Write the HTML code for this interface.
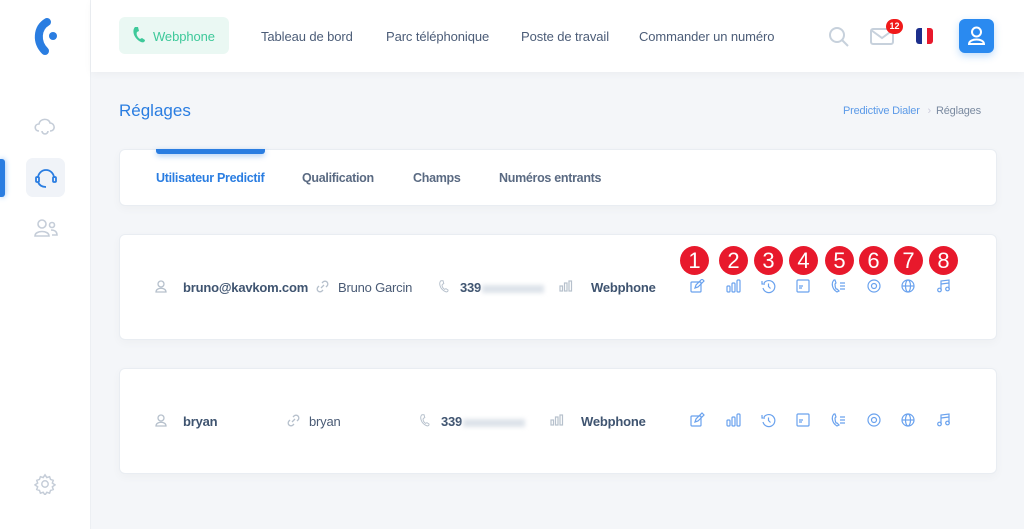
<!DOCTYPE html>
<html><head><meta charset="utf-8"><style>
*{margin:0;padding:0;box-sizing:border-box}
body{width:1024px;height:529px;overflow:hidden;background:#f4f6f9;font-family:"Liberation Sans",sans-serif;position:relative;color:#4a5b75}
.side{position:absolute;left:0;top:0;width:91px;height:529px;background:#fff;border-right:1px solid #eceff3}
.hdr{position:absolute;left:91px;top:0;right:0;height:72px;background:#fff;box-shadow:0 2px 8px rgba(0,0,0,.04)}
.abs{position:absolute}
.nav{position:absolute;top:29px;font-size:13px;color:#4c5d78;letter-spacing:-0.1px}
.card{position:absolute;left:119px;width:878px;background:#fff;border-radius:6px;border:1px solid #e9edf2;box-shadow:0 3px 10px rgba(0,0,0,.03)}
.t{position:absolute;font-size:13px;letter-spacing:-0.2px}
.b{font-weight:bold;color:#3f5470}
.ic{position:absolute}
.badge{position:absolute;top:246px;width:29px;height:29px;border-radius:50%;background:#e8192c;color:#fff;font-size:22px;text-align:center;line-height:29px}
.blur{display:inline-block;width:62px;height:8px;background:#dde3ea;filter:blur(2px);vertical-align:middle;margin-left:1px}
.tab{position:absolute;top:171px;font-size:12.5px;font-weight:bold;color:#5a6a82;letter-spacing:-0.3px}
</style></head><body>
<div class="side">
 <svg class="ic" style="left:30px;top:16px" width="32" height="42" viewBox="0 0 32 42"><path d="M17 6 C7 12 6 26 15 35" fill="none" stroke="#2a7de1" stroke-width="8" stroke-linecap="round"/><circle cx="23" cy="20" r="4" fill="#2a7de1"/></svg>
 <svg class="ic" style="left:33px;top:116px" width="24" height="20" viewBox="0 0 24 20" fill="none" stroke="#c5cdd8" stroke-width="1.6"><path d="M6 15 C1 15 1 8 6 8 C7 2 16 2 17 7 C22 7 23 15 17 15"/><path d="M9 15 a3 3 0 0 0 6 0"/></svg>
 <div class="abs" style="left:0;top:159px;width:5px;height:38px;background:#2a7de1;border-radius:0 3px 3px 0;box-shadow:0 0 6px #8bbcf5"></div>
 <div class="abs" style="left:26px;top:158px;width:39px;height:39px;background:#f0f3f8;border-radius:7px"></div>
 <svg class="ic" style="left:34px;top:166px" width="24" height="24" viewBox="0 0 24 24" fill="none" stroke="#2a7de1" stroke-width="1.8"><path d="M4 12 a8 8 0 0 1 16 0"/><rect x="2" y="11" width="3" height="5" rx="1"/><rect x="19" y="11" width="3" height="5" rx="1"/><path d="M4 16 q2 5 8 5"/></svg>
 <svg class="ic" style="left:33px;top:218px" width="26" height="20" viewBox="0 0 26 20" fill="none" stroke="#c5cdd8" stroke-width="1.6"><circle cx="9" cy="6" r="4"/><path d="M2 18 c0-6 14-6 14 0z"/><circle cx="19" cy="7" r="2.5"/><path d="M18 12 c4 0 6 2 6 5h-5"/></svg>
 <svg class="ic" style="left:34px;top:473px" width="22" height="22" viewBox="0 0 24 24" fill="none" stroke="#c5cdd8" stroke-width="1.6"><circle cx="12" cy="12" r="3.5"/><path d="M12 2 l2 3 3-1 1 3 3 1-1 3 3 2-3 2 1 3-3 1-1 3-3-1-2 3-2-3-3 1-1-3-3-1 1-3-3-2 3-2-1-3 3-1 1-3 3 1z"/></svg>
</div>
<div class="hdr"></div>
<div class="abs" style="left:119px;top:17px;width:110px;height:37px;background:#eaf8f3;border-radius:6px"></div>
<svg class="ic" style="left:132px;top:26px" width="16" height="18" viewBox="0 0 16 18"><path d="M3 1 C0 4 1 12 9 16 C11 17 13 16 13 14 L10 12 L8 13 C5 11 4 8 5 6 L7 5 L6 1Z" fill="#3ec99a"/></svg>
<div class="nav" style="left:153px;color:#3ec99a">Webphone</div>
<div class="nav" style="left:261px">Tableau de bord</div>
<div class="nav" style="left:386px">Parc téléphonique</div>
<div class="nav" style="left:521px">Poste de travail</div>
<div class="nav" style="left:639px">Commander un numéro</div>
<svg class="ic" style="left:828px;top:26px" width="22" height="22" viewBox="0 0 22 22" fill="none" stroke="#c7d1dc" stroke-width="2"><circle cx="9" cy="9" r="7"/><path d="M14 14l6 6"/></svg>
<svg class="ic" style="left:870px;top:28px" width="24" height="17" viewBox="0 0 24 17" fill="none" stroke="#c7d1dc" stroke-width="2"><rect x="1" y="1" width="22" height="15" rx="2"/><path d="M1 2l11 8 11-8"/></svg>
<div class="abs" style="left:886px;top:19px;width:17px;height:15px;border-radius:8px;background:#f01a1a;color:#fff;font-size:9px;font-weight:bold;text-align:center;line-height:15px">12</div>
<div class="abs" style="left:916px;top:28px;width:17px;height:16px;border-radius:3px;overflow:hidden;display:flex"><div style="flex:1;background:#1c2f8c"></div><div style="flex:1;background:#fff"></div><div style="flex:1;background:#e8192c"></div></div>
<div class="abs" style="left:959px;top:19px;width:35px;height:34px;background:#2a8af0;border-radius:6px;box-shadow:0 3px 8px rgba(42,138,240,.3)"></div>
<svg class="ic" style="left:967px;top:26px" width="19" height="20" viewBox="0 0 19 20" fill="none" stroke="#fff" stroke-width="2"><circle cx="9.5" cy="6" r="4.5"/><path d="M2 18c0-6 15-6 15 0z"/></svg>
<div class="abs" style="left:119px;top:101px;font-size:17px;color:#2a7de1">Réglages</div>
<div class="abs" style="left:843px;top:105px;font-size:11px;color:#5b9ae8;letter-spacing:-0.2px">Predictive Dialer <span style="color:#ccd;margin:0 5px">›</span><span style="color:#7a8aa0">Réglages</span></div>
<div class="card" style="top:149px;height:57px"></div>
<div class="abs" style="left:156px;top:149px;width:109px;height:5px;background:#2a7de1;border-radius:0 0 3px 3px;box-shadow:0 2px 6px rgba(42,125,225,.4)"></div>
<div class="tab" style="left:156px;color:#2a7de1">Utilisateur Predictif</div>
<div class="tab" style="left:302px">Qualification</div>
<div class="tab" style="left:413px">Champs</div>
<div class="tab" style="left:499px">Numéros entrants</div>
<div class="card" style="top:234px;height:106px"></div>
<div class="card" style="top:368px;height:106px"></div>
<div class="badge" style="left:680px">1</div><div class="badge" style="left:719px">2</div><div class="badge" style="left:754px">3</div><div class="badge" style="left:789px">4</div><div class="badge" style="left:825px">5</div><div class="badge" style="left:859px">6</div><div class="badge" style="left:894px">7</div><div class="badge" style="left:929px">8</div>
<svg class="ic" style="left:155px;top:280px" width="12" height="13" viewBox="0 0 12 13" fill="none" stroke="#b6c0cc" stroke-width="1.3"><circle cx="6" cy="4" r="3"/><path d="M1 12c0-5 10-5 10 0z"/></svg>
<div class="t b" style="left:183px;top:280px">bruno@kavkom.com</div>
<svg class="ic" style="left:316px;top:280px" width="13" height="13" viewBox="0 0 13 13" fill="none" stroke="#b6c0cc" stroke-width="1.3"><path d="M5 8l3-3M6 3l1-1a2.5 2.5 0 0 1 4 4l-1 1M7 10l-1 1a2.5 2.5 0 0 1-4-4l1-1"/></svg>
<div class="t" style="left:338px;top:280px">Bruno Garcin</div>
<svg class="ic" style="left:438px;top:280px" width="13" height="13" viewBox="0 0 16 18"><path d="M3 1 C0 4 1 12 9 16 C11 17 13 16 13 14 L10 12 L8 13 C5 11 4 8 5 6 L7 5 L6 1Z" fill="none" stroke="#b6c0cc" stroke-width="1.3"/></svg>
<div class="t b" style="left:460px;top:280px">339<span class="blur"></span></div>
<svg class="ic" style="left:559px;top:280px" width="14" height="12" viewBox="0 0 14 12" fill="none" stroke="#b6c0cc" stroke-width="1.2"><rect x="1" y="6" width="2.5" height="5"/><rect x="5.5" y="3" width="2.5" height="8"/><rect x="10" y="1" width="2.5" height="10"/></svg>
<div class="t b" style="left:591px;top:280px">Webphone</div>
<svg class="ic" style="left:155px;top:414px" width="12" height="13" viewBox="0 0 12 13" fill="none" stroke="#b6c0cc" stroke-width="1.3"><circle cx="6" cy="4" r="3"/><path d="M1 12c0-5 10-5 10 0z"/></svg>
<div class="t b" style="left:183px;top:414px">bryan</div>
<svg class="ic" style="left:287px;top:414px" width="13" height="13" viewBox="0 0 13 13" fill="none" stroke="#b6c0cc" stroke-width="1.3"><path d="M5 8l3-3M6 3l1-1a2.5 2.5 0 0 1 4 4l-1 1M7 10l-1 1a2.5 2.5 0 0 1-4-4l1-1"/></svg>
<div class="t" style="left:309px;top:414px">bryan</div>
<svg class="ic" style="left:419px;top:414px" width="13" height="13" viewBox="0 0 16 18"><path d="M3 1 C0 4 1 12 9 16 C11 17 13 16 13 14 L10 12 L8 13 C5 11 4 8 5 6 L7 5 L6 1Z" fill="none" stroke="#b6c0cc" stroke-width="1.3"/></svg>
<div class="t b" style="left:441px;top:414px">339<span class="blur"></span></div>
<svg class="ic" style="left:550px;top:414px" width="14" height="12" viewBox="0 0 14 12" fill="none" stroke="#b6c0cc" stroke-width="1.2"><rect x="1" y="6" width="2.5" height="5"/><rect x="5.5" y="3" width="2.5" height="8"/><rect x="10" y="1" width="2.5" height="10"/></svg>
<div class="t b" style="left:581px;top:414px">Webphone</div>
<svg width="0" height="0" style="position:absolute"><defs>
<g id="a1"><rect x="1" y="3" width="10" height="10" rx="1"/><path d="M5 9l1-3 6-6 2 2-6 6z"/></g>
<g id="a2"><rect x="1" y="7" width="3" height="6" rx="1"/><rect x="6" y="4" width="3" height="9" rx="1"/><rect x="11" y="1" width="3" height="12" rx="1"/></g>
<g id="a3"><path d="M3 4a6 6 0 1 1-1 5"/><path d="M1 2v3h3"/><path d="M7.5 4.5v3l2 2"/></g>
<g id="a4"><rect x="1" y="1" width="12" height="12" rx="1"/><path d="M3 7h4M3 9h3"/></g>
<g id="a5"><path d="M3 1 C0 4 1 10 6 13 L8 12 L6 10 L5 10 C4 8 4 6 4 5 L5 4 L4 1Z"/><path d="M9 4h5M9 7h5M9 10h5"/></g>
<g id="a6"><circle cx="7" cy="7" r="6"/><circle cx="7" cy="7" r="2.5"/></g>
<g id="a7"><circle cx="7" cy="7" r="6"/><ellipse cx="7" cy="7" rx="2.5" ry="6"/><path d="M1 7h12"/></g>
<g id="a8"><path d="M5 11V2l8-1v9"/><circle cx="3.5" cy="11" r="1.8"/><circle cx="11.5" cy="10" r="1.8"/><path d="M5 5l8-1"/></g>
</defs></svg>
<svg class="ic" style="left:690px;top:279px" width="280" height="150" viewBox="0 0 280 150" fill="none" stroke="#6aa2ee" stroke-width="1.2">
<use href="#a1" x="0" y="0"/><use href="#a2" x="36" y="0"/><use href="#a3" x="71" y="0"/><use href="#a4" x="106" y="0"/><use href="#a5" x="141" y="0"/><use href="#a6" x="177" y="0"/><use href="#a7" x="211" y="0"/><use href="#a8" x="246" y="0"/>
<use href="#a1" x="0" y="134"/><use href="#a2" x="36" y="134"/><use href="#a3" x="71" y="134"/><use href="#a4" x="106" y="134"/><use href="#a5" x="141" y="134"/><use href="#a6" x="177" y="134"/><use href="#a7" x="211" y="134"/><use href="#a8" x="246" y="134"/>
</svg>
</body></html>
